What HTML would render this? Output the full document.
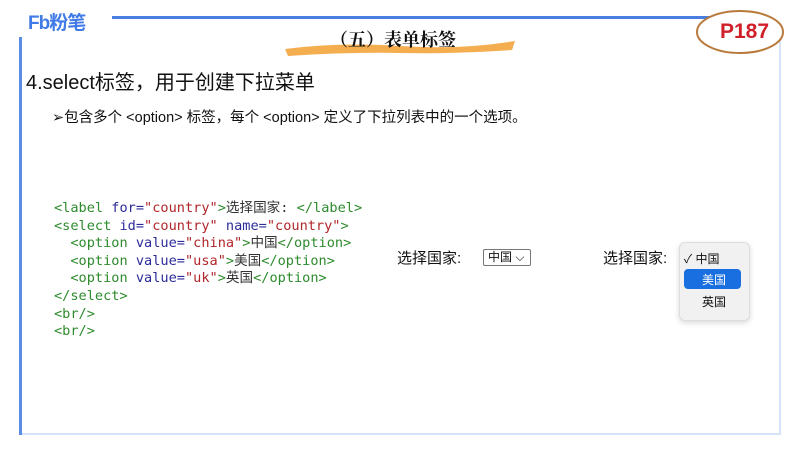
<!DOCTYPE html>
<html><head><meta charset="utf-8"><style>
body{margin:0;width:800px;height:450px;background:#fff;position:relative;overflow:hidden;font-family:"Liberation Sans","Noto Sans CJK SC",sans-serif}
.a{position:absolute}
.code{font-family:"DejaVu Sans Mono","Liberation Mono","Noto Sans CJK SC",monospace;font-size:13.6px;line-height:17.6px;color:#2e8b2e;white-space:pre}
.k{color:#2b2b9a}.s{color:#b0262a}.t{color:#333}
</style></head><body>
<div class="a" style="left:19px;top:37px;width:762px;height:398px;border:2px solid #d6e2f7;border-top:none;box-sizing:border-box"></div>
<div class="a" style="left:19px;top:37px;width:3px;height:398px;background:#5b8de6"></div>
<div class="a" style="left:112px;top:16px;width:600px;height:3px;background:#4a7ee0"></div>
<div class="a" style="left:28px;top:8px;font-size:19px;font-weight:bold;color:#3f7ae6;letter-spacing:-1px">Fb粉笔</div>
<svg class="a" style="left:280px;top:32px" width="240" height="30"><path d="M5 17 Q60 10 120 14 T235 9 L232 18 Q170 22 120 21 T8 24 Z" fill="#f2a030" opacity=".85"/></svg>
<div class="a" style="left:330px;top:26px;font-size:18px;font-weight:bold;color:#111;font-family:'Noto Serif CJK SC',serif">（五）表单标签</div>
<svg class="a" style="left:690px;top:8px" width="100" height="50"><ellipse cx="50" cy="24" rx="43" ry="21" fill="#fff" stroke="#b87a3c" stroke-width="2"/></svg>
<div class="a" style="left:720px;top:20px;font-size:21px;font-weight:bold;color:#d0202a">P187</div>
<div class="a" style="left:26px;top:66px;font-size:20px;color:#111">4.select标签，用于创建下拉菜单</div>
<div class="a" style="left:52px;top:106px;font-size:14.5px;color:#111">➢包含多个 &lt;option&gt; 标签，每个 &lt;option&gt; 定义了下拉列表中的一个选项。</div>
<div class="a code" style="left:54px;top:200px">&lt;label <span class="k">for=</span><span class="s">"country"</span>&gt;<span class="t">选择国家: </span>&lt;/label&gt;
&lt;select <span class="k">id=</span><span class="s">"country"</span> <span class="k">name=</span><span class="s">"country"</span>&gt;
  &lt;option <span class="k">value=</span><span class="s">"china"</span>&gt;<span class="t">中国</span>&lt;/option&gt;
  &lt;option <span class="k">value=</span><span class="s">"usa"</span>&gt;<span class="t">美国</span>&lt;/option&gt;
  &lt;option <span class="k">value=</span><span class="s">"uk"</span>&gt;<span class="t">英国</span>&lt;/option&gt;
&lt;/select&gt;
&lt;br/&gt;
&lt;br/&gt;</div>
<div class="a" style="left:397px;top:247px;font-size:15px;color:#111">选择国家:</div>
<div class="a" style="left:483px;top:249px;width:48px;height:17px;border:1px solid #777;border-radius:2px;box-sizing:border-box;font-size:12px;line-height:15px;padding-left:4px;color:#111">中国 ⌵</div>
<div class="a" style="left:603px;top:247px;font-size:15px;color:#111">选择国家:</div>
<div class="a" style="left:679px;top:242px;width:69px;height:77px;background:#f1f1f1;border:1px solid #ddd;border-radius:6px;box-shadow:0 2px 6px rgba(0,0,0,.15)"></div>
<div class="a" style="left:684px;top:250px;font-size:12px;color:#111">✓ 中国</div>
<div class="a" style="left:684px;top:269px;width:57px;height:20px;background:#1a6fe0;border-radius:4px"></div>
<div class="a" style="left:702px;top:271px;font-size:12px;color:#fff">美国</div>
<div class="a" style="left:702px;top:293px;font-size:12px;color:#111">英国</div>
</body></html>
